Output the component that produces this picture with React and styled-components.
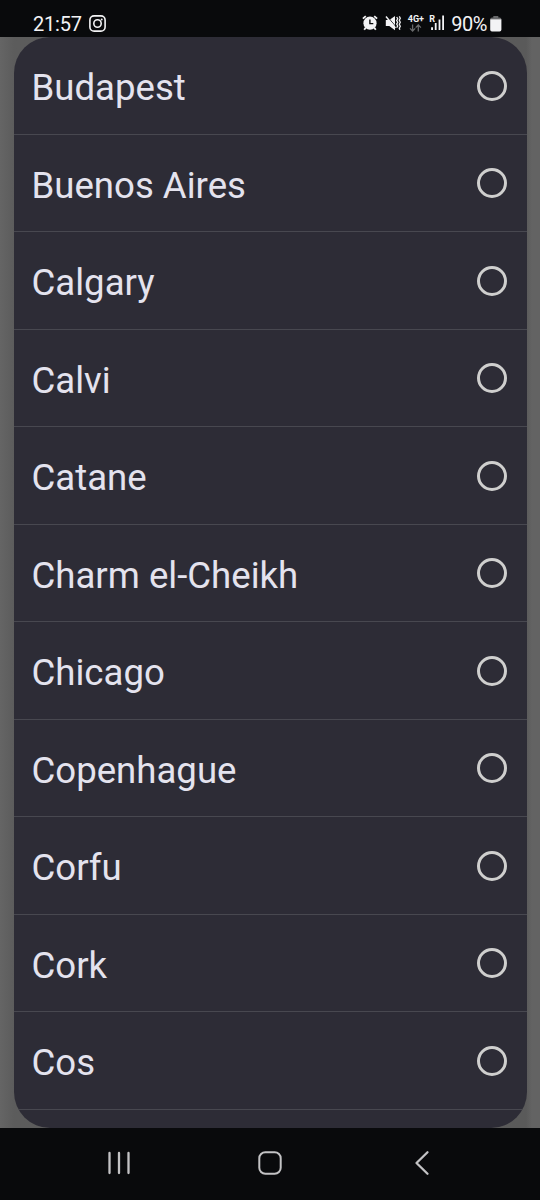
import React from "react";
import styled, { createGlobalStyle } from "styled-components";

const GlobalStyle = createGlobalStyle`
  * {
    box-sizing: border-box;
  }

  body {
    margin: 0;
    background: #090a0c;
    font-family: Roboto, sans-serif;
  }
`;

const Screen = styled.div`
  display: flex;
  flex-direction: column;
  width: 540px;
  height: 1200px;
  overflow: hidden;
`;

const StatusBar = styled.header`
  display: flex;
  align-items: flex-start;
  justify-content: space-between;
  height: 37px;
  flex-shrink: 0;
  padding: 13px 38px 0 33px;
  background: #090a0c;
  color: #f3f3f5;
`;

const StatusGroup = styled.div`
  display: flex;
  align-items: center;
  height: 20px;
`;

const StatusText = styled.span`
  padding-top: 1px;
  font-size: 20px;
  line-height: 20px;
  letter-spacing: ${(props) => props.$spacing || "-0.2px"};
`;

const StatusIcon = styled.svg`
  display: block;
  flex-shrink: 0;
  margin-left: ${(props) => props.$gap || 0}px;
`;

const Network = styled.div`
  display: flex;
  flex-direction: column;
  align-items: center;
  width: 17px;
  height: 18px;
  padding-top: 1px;
  margin-left: 6px;
  font-size: 9px;
  font-weight: 700;
  line-height: 9px;
`;

const Signal = styled.div`
  display: flex;
  align-items: flex-start;
  width: 16px;
  height: 18px;
  padding-top: 1px;
  margin: 0 6px 0 5px;
  font-size: 9px;
  font-weight: 700;
  line-height: 9px;
`;

const Backdrop = styled.main`
  height: 1091px;
  flex-shrink: 0;
  padding: 0 13.5px;
  background: linear-gradient(90deg, #656565 0, #5c5c5c 14px, #5a5a5a 526px, #636363 532px);
`;

const Sheet = styled.ul`
  height: 100%;
  margin: 0;
  padding: 0;
  overflow: hidden;
  list-style: none;
  border-radius: 36px;
  background: #2d2c36;
`;

const Row = styled.li`
  display: flex;
  align-items: center;
  justify-content: space-between;
  height: 97.5px;
  padding: 0.5px 20px 0 18px;
  border-bottom: 1.5px solid #484850;
`;

const City = styled.span`
  padding-top: 5.5px;
  color: #e4e3ee;
  font-size: 36.6px;
  line-height: 44px;
`;

const Radio = styled.span`
  width: 30px;
  height: 30px;
  border: 3px solid #cfcfce;
  border-radius: 50%;
`;

const NavBar = styled.nav`
  display: flex;
  justify-content: space-between;
  flex: 1;
  padding: 21px 106px 0 106px;
  background: #090a0c;
`;

const NavIcon = styled.svg`
  display: block;
  fill: none;
  stroke: #c3c3c5;
  stroke-width: 2;
  stroke-linecap: round;
  stroke-linejoin: round;
`;

const cities = [
  "Budapest",
  "Buenos Aires",
  "Calgary",
  "Calvi",
  "Catane",
  "Charm el-Cheikh",
  "Chicago",
  "Copenhague",
  "Corfu",
  "Cork",
  "Cos",
];

const InstagramIcon = () => (
  <StatusIcon $gap={7} width="17" height="17" viewBox="0 0 17 17" fill="none" stroke="#f3f3f5">
    <rect x="0.9" y="0.9" width="15.2" height="15.2" rx="4.2" strokeWidth="1.6" />
    <circle cx="8.5" cy="8.5" r="3.7" strokeWidth="1.6" />
    <circle cx="12.7" cy="4.4" r="1" fill="#f3f3f5" stroke="none" />
  </StatusIcon>
);

const AlarmIcon = () => (
  <StatusIcon width="16" height="16" viewBox="0 0 16 16" fill="none">
    <circle cx="8" cy="8.2" r="6.6" fill="#f3f3f5" />
    <path d="M0.9 3.7 3.8 1.1M15.1 3.7 12.2 1.1M3.8 12.6 2.2 14.8M12.2 12.6l1.6 2.2" stroke="#f3f3f5" strokeWidth="1.8" />
    <path d="M7.9 4.6v4h3.4" stroke="#090a0c" strokeWidth="1.4" />
  </StatusIcon>
);

const MuteIcon = () => (
  <StatusIcon $gap={7} width="16" height="16" viewBox="0 0 16 16" fill="none">
    <path d="M0.8 5h3.5L10 1v14.2L4.3 11H0.8z" fill="#f3f3f5" />
    <path d="M2.6 1.8 10.6 11.4" stroke="#090a0c" strokeWidth="0.9" />
    <path d="M1 1.6 10.4 13" stroke="#f3f3f5" strokeWidth="1.5" />
    <path d="M11.7 2l1 1.7-1 1.8 1 1.8-1 1.8 1 1.8-1 1.8M14.3 1.4l1 1.9-1 2 1 2-1 2 1 2-1 2 .6 1.4" stroke="#f3f3f5" strokeWidth="1.3" />
  </StatusIcon>
);

const ArrowsIcon = () => (
  <StatusIcon width="13" height="8" viewBox="0 0 13 8" fill="none" stroke="#68696b" strokeWidth="1.3">
    <path d="M3.6 0.5v6.4M1 4.4l2.6 2.7 2.6-2.7M9.3 7.5V1.1M6.7 3.6l2.6-2.7 2.6 2.7" />
  </StatusIcon>
);

const BarsIcon = () => (
  <StatusIcon width="11" height="15" viewBox="0 0 11 15" fill="#f3f3f5" style={{ overflow: "visible" }}>
    <path d="M-3.9 12.2h1.9V15h-1.9zM-.2 8h1.8v7H-.2zM3.6 4.5h1.8V15H3.6zM7.2 0.6H9v14.4H7.2z" />
  </StatusIcon>
);

const BatteryIcon = () => (
  <StatusIcon $gap={3} width="12" height="17" viewBox="0 0 12 17">
    <path d="M3.3 1h5v1.5h1.2q1.9 0 1.9 1.7H.2q0-1.7 1.9-1.7h1.2z" fill="#68696b" />
    <path d="M.2 4.2h11.2v10.5q0 1.8-1.8 1.8H2q-1.8 0-1.8-1.8z" fill="#f3f3f5" />
  </StatusIcon>
);

const App = () => {
  return (
    <>
      <GlobalStyle />
      <Screen>
        <StatusBar>
          <StatusGroup>
            <StatusText>21:57</StatusText>
            <InstagramIcon />
          </StatusGroup>
          <StatusGroup>
            <AlarmIcon />
            <MuteIcon />
            <Network>
              4G+
              <ArrowsIcon />
            </Network>
            <Signal>
              R
              <BarsIcon />
            </Signal>
            <StatusText $spacing="-0.5px">90%</StatusText>
            <BatteryIcon />
          </StatusGroup>
        </StatusBar>
        <Backdrop>
          <Sheet>
            {cities.map((city) => (
              <Row key={city}>
                <City>{city}</City>
                <Radio />
              </Row>
            ))}
          </Sheet>
        </Backdrop>
        <NavBar>
          <NavIcon width="26" height="28" viewBox="0 0 26 28">
            <path d="M3.5 4v20M13 4v20M22.5 4v20" strokeWidth="2.3" />
          </NavIcon>
          <NavIcon width="26" height="28" viewBox="0 0 26 28">
            <rect x="2.3" y="3.3" width="21.4" height="21.4" rx="6" />
          </NavIcon>
          <NavIcon width="26" height="28" viewBox="0 0 26 28">
            <path d="M19.5 3.2 8.5 14l11 10.8" strokeWidth="2.3" />
          </NavIcon>
        </NavBar>
      </Screen>
    </>
  );
};

export default App;
